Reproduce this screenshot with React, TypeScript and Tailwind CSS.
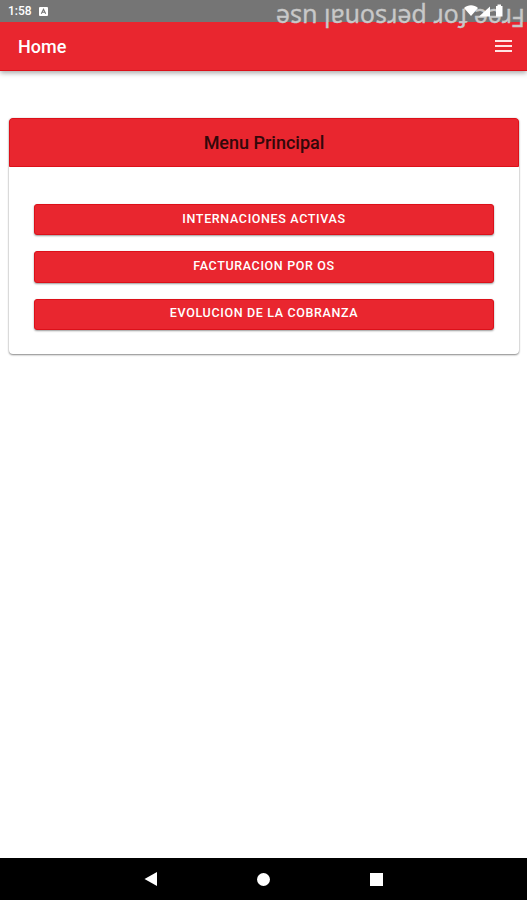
import React from 'react';

const menuItems = [
  { id: 1, label: 'Internaciones activas' },
  { id: 2, label: 'Facturacion por OS' },
  { id: 3, label: 'Evolucion de la cobranza' },
];

function StatusBar() {
  return (
    <div className="relative z-20 h-[22px] shrink-0 bg-[#757575] flex items-center justify-between pl-2 pr-[22px]">
      <div className="flex items-center gap-[7px]">
        <span className="text-[12px] leading-[22px] font-medium text-white">1:58</span>
        <svg className="w-[9px] h-[9px]" viewBox="0 0 9 9">
          <rect width="9" height="9" rx="1" fill="#fff" />
          <path d="M2.3 6.7L4.5 2.2L6.7 6.7M3.3 5.3H5.7" fill="none" stroke="#757575" strokeWidth="1.1" />
        </svg>
      </div>
      <span className="absolute right-[2px] top-[3px] rotate-180 whitespace-nowrap text-[25px] leading-[32px] text-[#c8c8c8] [-webkit-text-stroke:0.3px_#c8c8c8] font-['Noto_Sans']">
        Free for personal use
      </span>
      <svg className="relative w-[41px] h-[14px]" viewBox="0 0 41 14" fill="#fff">
        <path d="M0 4C4 0.4 10 0.4 14 4L7 12Z" />
        <path d="M15 12.500L26 2.500V12.500Z" />
        <path d="M32 2H33.500V0.500H37V2H38.500V12.500H32Z" />
      </svg>
    </div>
  );
}

function Toolbar() {
  return (
    <header className="relative z-10 h-[49px] shrink-0 bg-[#e9262f] border-b border-[#dc1019] flex items-center justify-between pl-[18px] pr-[15px] shadow-[0_2px_5px_rgba(0,0,0,0.35)]">
      <h1 className="text-[18px] font-medium text-white">Home</h1>
      <button aria-label="Menu" className="flex flex-col gap-[3px]">
        <span className="block w-[17px] h-[2px] bg-[#ffe4e4]" />
        <span className="block w-[17px] h-[2px] bg-[#ffe4e4]" />
        <span className="block w-[17px] h-[2px] bg-[#ffe4e4]" />
      </button>
    </header>
  );
}

function NavigationBar() {
  return (
    <nav className="h-[42px] shrink-0 bg-black flex items-center pl-[144px] gap-[100px]">
      <svg className="w-[13px] h-[14px]" viewBox="0 0 13 14" fill="#fff">
        <path d="M0.500 7L13 0V14Z" />
      </svg>
      <span className="block w-[13px] h-[13px] rounded-full bg-white" />
      <span className="block w-[13px] h-[13px] bg-white" />
    </nav>
  );
}

export default function App() {
  return (
    <div className="h-screen flex flex-col overflow-hidden bg-white font-[Roboto,sans-serif]">
      <StatusBar />
      <Toolbar />

      <main className="flex-1 pl-[9px] pr-2 pt-[47px]">
        <section className="h-[236px] rounded-[4px] overflow-hidden bg-white shadow-[0_1px_2px_rgba(0,0,0,0.45),0_0_2px_rgba(0,0,0,0.12)]">
          <div className="h-[49px] bg-[#e9262f] border border-[#dc1019] rounded-t-[3px] flex items-center justify-center">
            <h2 className="text-[18px] font-medium text-[#32080a]">Menu Principal</h2>
          </div>
          <div className="px-[25px] pt-[37px] flex flex-col gap-4">
            {menuItems.map((item) => (
              <button
                key={item.id}
                className="h-[31.300px] rounded-[3px] bg-[#e9262f] border border-[#dc1019] pb-[1px] text-[12.500px] leading-none font-medium uppercase tracking-[0.65px] text-white shadow-[0_1px_2px_rgba(0,0,0,0.4)]"
              >
                {item.label}
              </button>
            ))}
          </div>
        </section>
      </main>

      <NavigationBar />
    </div>
  );
}
